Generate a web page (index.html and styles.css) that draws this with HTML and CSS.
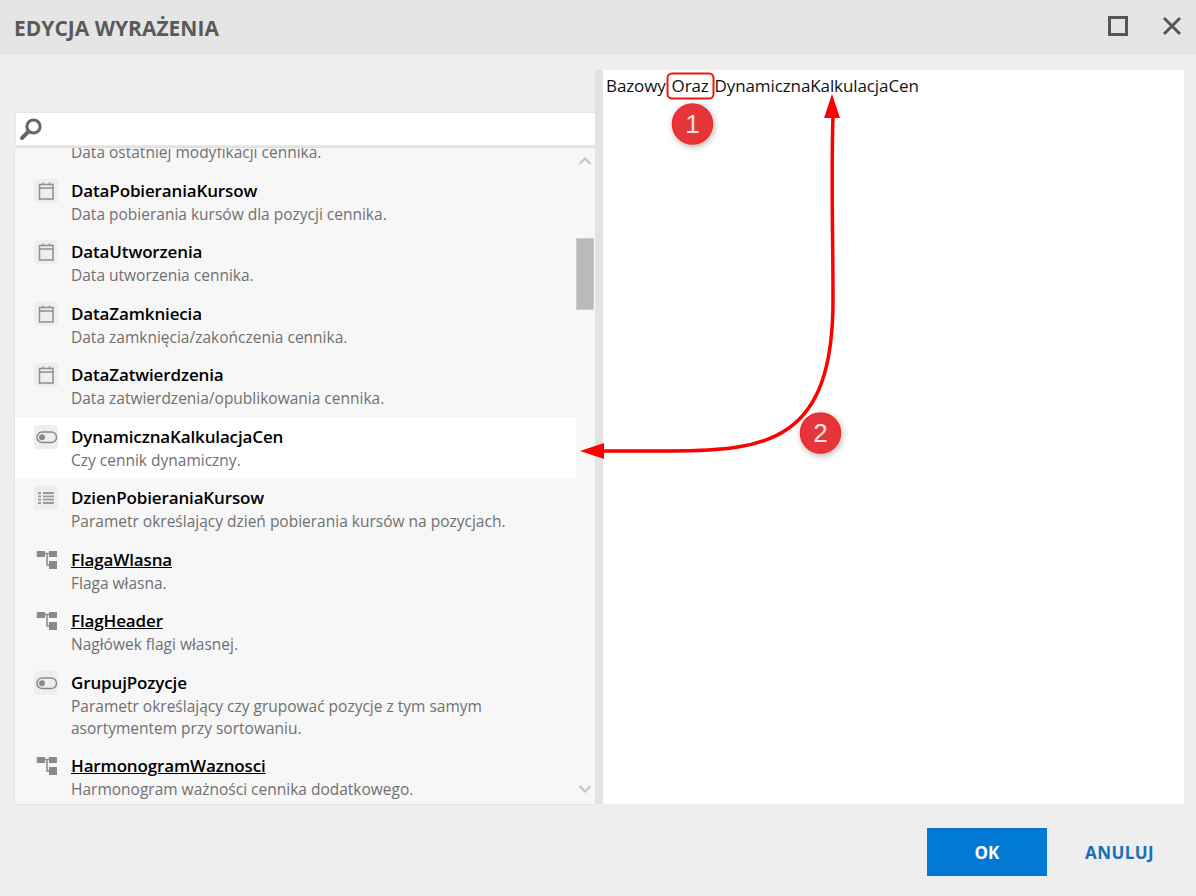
FILE: index.html
```html
<!DOCTYPE html>
<html lang="pl">
<head>
<meta charset="utf-8">
<title>Edycja wyrażenia</title>
<link rel="stylesheet" href="styles.css">
</head>
<body>
<svg width="0" height="0" class="defs">
  <symbol id="cal" viewBox="0 0 24 24"><path d="M5.5 5.5h13.5v14.5h-13.5zM5.5 9h13.5M9 3.5v2M15.5 3.5v2" fill="none" stroke="#8f8f8f" stroke-width="1.5"/></symbol>
  <symbol id="tog" viewBox="0 0 24 24"><rect x="3" y="7" width="19.5" height="10.5" rx="5.2" fill="none" stroke="#8a8a8a" stroke-width="1.5"/><circle cx="8" cy="12.2" r="3" fill="#8a8a8a"/></symbol>
  <symbol id="lst" viewBox="0 0 24 24"><path d="M4 7h3M9 7h11M4 10.3h3M9 10.3h11M4 13.6h3M9 13.6h11M4 17h3M9 17h11" fill="none" stroke="#999" stroke-width="1.8"/></symbol>
  <symbol id="tree" viewBox="0 0 24 24"><path d="M2.7 3h8.3v6H2.7zM15 3h8v6h-8zM15 13h8v8h-8z" fill="#8a8a8a"/><path d="M11 5.5h4M13 5.5V17h2" fill="none" stroke="#8a8a8a" stroke-width="1.5"/></symbol>
</svg>
<div class="dialog">
  <header class="head">
    <h1 class="title">EDYCJA WYRAŻENIA</h1>
    <div class="head-actions">
      <svg class="win-icon" viewBox="0 0 20 20"><rect x="1.5" y="1.5" width="17" height="17" fill="none" stroke="#555" stroke-width="3"/></svg>
      <svg class="win-icon" viewBox="0 0 20 20"><path d="M2 2l16 16M18 2L2 18" fill="none" stroke="#555" stroke-width="3"/></svg>
    </div>
  </header>
  <main class="body">
    <section class="left">
      <div class="search">
        <svg class="search-icon" viewBox="0 0 24 24"><circle cx="14.5" cy="9.5" r="6.6" fill="none" stroke="#666" stroke-width="3"/><path d="M9.5 14.5L3 21" stroke="#666" stroke-width="4" stroke-linecap="round"/></svg>
      </div>
      <div class="list-wrap">
        <div class="list">
          <div class="row first"><span class="chip"><svg class="ic"><use href="#cal"/></svg></span><div class="txt"><div class="name">DataModyfikacji</div><div class="desc">Data ostatniej modyfikacji cennika.</div></div></div>
          <div class="row"><span class="chip"><svg class="ic"><use href="#cal"/></svg></span><div class="txt"><div class="name">DataPobieraniaKursow</div><div class="desc">Data pobierania kursów dla pozycji cennika.</div></div></div>
          <div class="row"><span class="chip"><svg class="ic"><use href="#cal"/></svg></span><div class="txt"><div class="name">DataUtworzenia</div><div class="desc">Data utworzenia cennika.</div></div></div>
          <div class="row"><span class="chip"><svg class="ic"><use href="#cal"/></svg></span><div class="txt"><div class="name">DataZamkniecia</div><div class="desc">Data zamknięcia/zakończenia cennika.</div></div></div>
          <div class="row"><span class="chip"><svg class="ic"><use href="#cal"/></svg></span><div class="txt"><div class="name">DataZatwierdzenia</div><div class="desc">Data zatwierdzenia/opublikowania cennika.</div></div></div>
          <div class="row active"><span class="chip"><svg class="ic"><use href="#tog"/></svg></span><div class="txt"><div class="name">DynamicznaKalkulacjaCen</div><div class="desc">Czy cennik dynamiczny.</div></div></div>
          <div class="row"><span class="chip"><svg class="ic"><use href="#lst"/></svg></span><div class="txt"><div class="name">DzienPobieraniaKursow</div><div class="desc">Parametr określający dzień pobierania kursów na pozycjach.</div></div></div>
          <div class="row"><span class="chip plain"><svg class="ic"><use href="#tree"/></svg></span><div class="txt"><div class="name link">FlagaWlasna</div><div class="desc">Flaga własna.</div></div></div>
          <div class="row"><span class="chip plain"><svg class="ic"><use href="#tree"/></svg></span><div class="txt"><div class="name link">FlagHeader</div><div class="desc">Nagłówek flagi własnej.</div></div></div>
          <div class="row"><span class="chip"><svg class="ic"><use href="#tog"/></svg></span><div class="txt"><div class="name">GrupujPozycje</div><div class="desc">Parametr określający czy grupować pozycje z tym samym<br>asortymentem przy sortowaniu.</div></div></div>
          <div class="row"><span class="chip plain"><svg class="ic"><use href="#tree"/></svg></span><div class="txt"><div class="name link">HarmonogramWaznosci</div><div class="desc">Harmonogram ważności cennika dodatkowego.</div></div></div>
        </div>
        <div class="scroll">
          <svg class="chev" viewBox="0 0 14 10"><path d="M1.5 8L7 2.5 12.5 8" fill="none" stroke="#c4c4c4" stroke-width="2"/></svg>
          <div class="thumb"></div>
          <svg class="chev" viewBox="0 0 14 10"><path d="M1.5 2L7 7.5 12.5 2" fill="none" stroke="#c4c4c4" stroke-width="2"/></svg>
        </div>
      </div>
    </section>
    <div class="split"></div>
    <section class="editor">Bazowy Oraz DynamicznaKalkulacjaCen</section>
  </main>
  <footer class="foot">
    <button class="ok">OK</button>
    <button class="cancel">ANULUJ</button>
  </footer>
</div>
<svg class="notes" viewBox="0 0 1196 896">
  <defs><filter id="sh" x="-30%" y="-30%" width="170%" height="170%"><feDropShadow dx="1" dy="2" stdDeviation="3" flood-color="#000" flood-opacity=".3"/></filter></defs>
  <rect x="667.5" y="73.5" width="46" height="25" rx="4.5" fill="none" stroke="#f01515" stroke-width="2"/>
  <path d="M603 451 H670 C770 451 833 440 833 300 C833 230 831 180 833 115" fill="none" stroke="#f00" stroke-width="3.5"/>
  <path d="M832 94L824 118H840zM580 451L604 443V459z" fill="#f00"/>
  <circle cx="692.5" cy="124" r="20" fill="#e5353b" stroke="#ee2b2b" stroke-width="1.5" filter="url(#sh)"/>
  <circle cx="820.5" cy="433" r="20" fill="#e5353b" stroke="#ee2b2b" stroke-width="1.5" filter="url(#sh)"/>
  <text class="num" x="692.5" y="133">1</text>
  <text class="num" x="820.5" y="442">2</text>
</svg>
</body>
</html>
```
FILE: styles.css
```css
* { box-sizing: border-box; }
html, body { margin: 0; height: 100%; }
body { font-family: "Open Sans", "Noto Sans", sans-serif; background: #eeeeee; position: relative; overflow: hidden; }
.defs { position: absolute; }
.dialog { height: 896px; display: flex; flex-direction: column; }
.head { height: 55px; background: #e5e5e5; display: flex; align-items: center; justify-content: space-between; padding: 0 14px; flex: none; }
.title { margin: 0; font-size: 21px; font-weight: 700; color: #5a5a5a; }
.head-actions { display: flex; gap: 34px; align-items: center; margin-bottom: 3px; }
.win-icon { width: 20px; height: 20px; display: block; }
.body { flex: none; height: 749px; padding: 15px 12px 0 15px; display: flex; }
.left { width: 580px; padding-top: 42px; display: flex; flex-direction: column; }
.search { height: 36px; background: #fff; border-style: solid; border-color: #e8e8e8; border-width: 1px 0 3px 1px; display: flex; align-items: center; padding-left: 3px; flex: none; }
.search-icon { width: 24px; height: 24px; display: block; }
.list-wrap { flex: 1; min-height: 0; background: #f7f7f7; display: flex; box-shadow: 0 0 2px rgba(0,0,0,.12); }
.list { width: 561px; overflow: hidden; }
.row { display: flex; padding: 8px 0 7.5px 19px; }
.row.first { margin-top: -39px; }
.row.active { background: #fff; }
.chip { width: 24px; height: 24px; border-radius: 3px; background: #eeeeee; margin-right: 13px; flex: none; display: flex; align-items: center; justify-content: center; }
.chip.plain { background: none; }
.ic { width: 24px; height: 24px; display: block; }
.txt { min-width: 0; }
.name { font-size: 17px; line-height: 23px; font-weight: 600; color: #000; letter-spacing: -0.14px; }
.name.link { text-decoration: underline; }
.desc { font-size: 15.5px; line-height: 22px; color: #707070; margin-top: 1px; }
.scroll { width: 19px; display: flex; flex-direction: column; align-items: center; padding: 8px 1px 0 0; }
.chev { width: 14px; height: 10px; display: block; flex: none; }
.thumb { width: 18px; height: 72px; margin-top: 72px; margin-bottom: auto; background: #b9b9b9; border: 1px solid #cdcdcd; }
.scroll .chev:last-child { margin-bottom: 10px; }
.split { width: 8px; background: #e3e3e3; flex: none; }
.editor { flex: 1; background: #fff; padding: 5px 3px; font-size: 17px; line-height: 22px; color: #111; letter-spacing: -0.1px; word-spacing: 1.5px; }
.foot { flex: 1; display: flex; justify-content: flex-end; align-items: flex-start; padding: 24px 4px 0 0; }
.ok, .cancel { font-family: inherit; font-size: 17px; font-weight: 700; border: 0; height: 48px; cursor: pointer; }
.ok { width: 120px; background: #0078d4; color: #fff; }
.cancel { width: 145px; background: none; color: #1a6fb5; letter-spacing: 0.4px; }
.notes { position: absolute; left: 0; top: 0; width: 1196px; height: 896px; pointer-events: none; }
.num { font-family: "Liberation Sans", sans-serif; font-size: 26px; fill: #fbe3e3; text-anchor: middle; }
```
